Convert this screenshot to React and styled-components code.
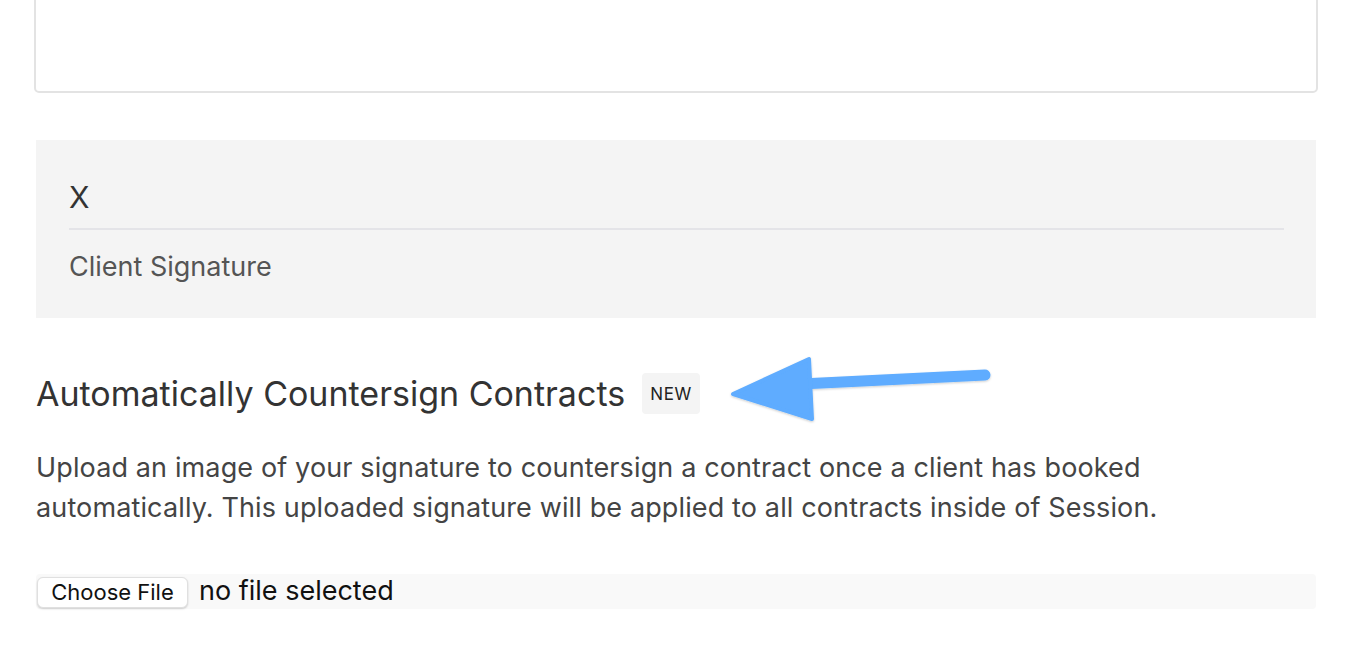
import React from "react";
import styled, { createGlobalStyle } from "styled-components";

const Global = createGlobalStyle`
  html, body { margin: 0; padding: 0; background: #ffffff; }
  body { font-family: Inter, "Noto Sans", sans-serif; overflow: hidden; }
`;

const Page = styled.div`
  position: relative;
  width: 1354px;
  height: 658px;
  overflow: hidden;
  padding: 0 38px 0 36px;
  box-sizing: border-box;
`;

const TextArea = styled.div`
  margin: -40px -2px 0;
  height: 133px;
  border: 2px solid #e3e3e3;
  border-radius: 5px;
  box-sizing: border-box;
  background: #fff;
`;

const SignaturePanel = styled.div`
  margin-top: 47px;
  height: 178px;
  background: #f4f4f4;
  padding: 40px 32px 0 33px;
  box-sizing: border-box;
`;

const SignMark = styled.div`
  font-size: 30px;
  line-height: 34px;
  color: #333;
  height: 50px;
  border-bottom: 2px solid #e4e4e8;
  box-sizing: border-box;
`;

const SignLabel = styled.div`
  margin-top: 21px;
  font-size: 27px;
  line-height: 32px;
  color: #555;
`;

const HeadingRow = styled.div`
  position: relative;
  margin-top: 55px;
  display: flex;
  align-items: center;
  gap: 17px;
  height: 41px;
`;

const Heading = styled.h2`
  margin: 0;
  font-size: 34px;
  font-weight: 400;
  color: #333;
  line-height: 41px;
`;

const Badge = styled.span`
  display: inline-flex;
  align-items: center;
  justify-content: center;
  width: 58px;
  height: 41px;
  background: #f4f4f4;
  border-radius: 4px;
  font-size: 17px;
  letter-spacing: 0.6px;
  color: #222;
`;

const Arrow = styled.svg`
  position: absolute;
  left: 683px;
  top: -25px;
  overflow: visible;
`;

const Description = styled.p`
  margin: 34px 0 0;
  font-size: 27px;
  line-height: 40px;
  letter-spacing: 0.13px;
  color: #444;
`;

const FileRow = styled.div`
  margin-top: 46px;
  height: 35px;
  background: #f9f9f9;
  border-radius: 4px;
  display: flex;
  align-items: center;
  gap: 11px;
  padding-left: 1px;
`;

const ChooseButton = styled.button`
  height: 31px;
  width: 151px;
  padding: 0;
  background: #fff;
  border: 1px solid #e0e0e0;
  border-radius: 6px;
  box-shadow: 0 1px 2px rgba(0, 0, 0, 0.18);
  font-family: Inter, "Noto Sans", sans-serif;
  font-size: 22px;
  color: #111;
  margin-top: 1px;
`;

const FileName = styled.span`
  font-size: 27px;
  color: #111;
  margin-top: -2px;
`;

export default function App() {
  return (
    <>
      <Global />
      <Page>
        <TextArea />
        <SignaturePanel>
          <SignMark>X</SignMark>
          <SignLabel>Client Signature</SignLabel>
        </SignaturePanel>
        <HeadingRow>
          <Heading>Automatically Countersign Contracts</Heading>
          <Badge>NEW</Badge>
          <Arrow width="280" height="80" viewBox="0 0 280 80">
            <defs>
              <filter id="sh" x="-20%" y="-20%" width="140%" height="140%">
                <feDropShadow dx="0" dy="1" stdDeviation="1" floodColor="#000" floodOpacity="0.2" />
              </filter>
            </defs>
            <g filter="url(#sh)" fill="#5eacff" stroke="#5eacff" strokeLinejoin="round" strokeLinecap="round">
              <line x1="82" y1="36" x2="266" y2="27" strokeWidth="11" />
              <polygon points="14,46 90,11 93,71" strokeWidth="4" />
            </g>
          </Arrow>
        </HeadingRow>
        <Description>
          Upload an image of your signature to countersign a contract once a client has booked
          <br />
          automatically. This uploaded signature will be applied to all contracts inside of Session.
        </Description>
        <FileRow>
          <ChooseButton type="button">Choose File</ChooseButton>
          <FileName>no file selected</FileName>
        </FileRow>
      </Page>
    </>
  );
}
